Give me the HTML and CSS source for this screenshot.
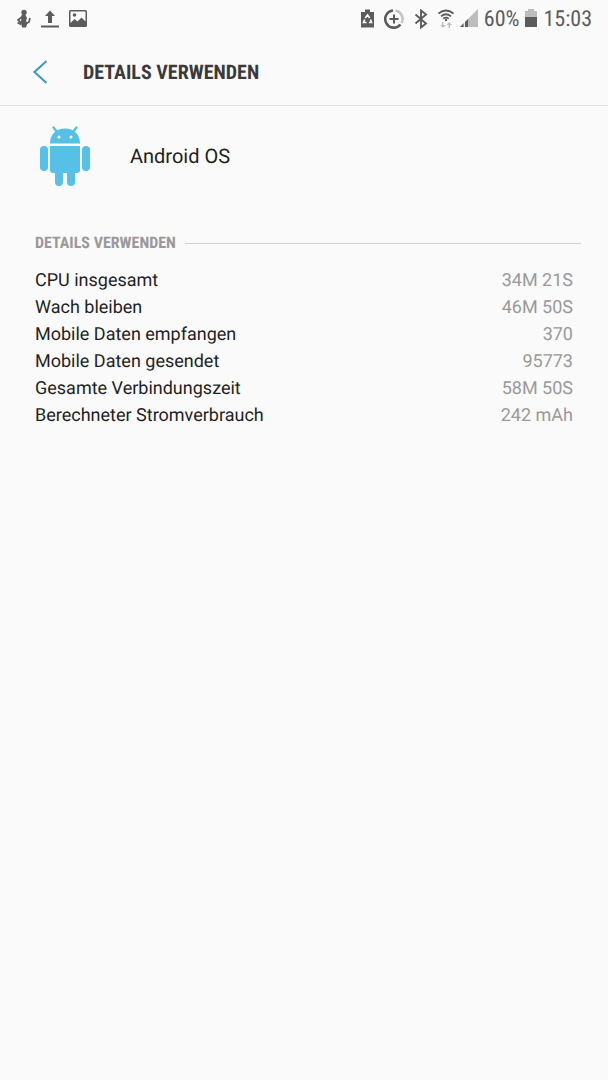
FILE: index.html
```html
<!DOCTYPE html>
<html lang="de">
<head>
    <meta charset="UTF-8">
    <meta name="viewport" content="width=device-width, initial-scale=1.0">
    <title>Details verwenden</title>
    <link rel="stylesheet" href="styles.css">
</head>
<body>
    <div class="status-bar">
        <div class="status-left">
            <svg width="14" height="20" viewBox="0 0 14 20" fill="#5c5c5c">
                <circle cx="7" cy="3.500" r="2.700"/>
                <path d="M4.500 6h4l1.500 3-1 3 1.500 2-1.500 4.500H5L4 14z"/>
                <path d="M5.500 7.500L1 11l3.500 3M.5 13.500L4 15.500M9.500 14.500l2.500-1.500 1-4" fill="none" stroke="#5c5c5c" stroke-width="1.700"/>
            </svg>
            <svg width="18" height="20" viewBox="0 0 18 20" fill="#5c5c5c">
                <path d="M9 1.500l5 5.500h-3v7H7V7H4z"/>
                <path d="M0 16.500h18v2H0z"/>
            </svg>
            <svg width="18" height="20" viewBox="0 0 18 20" fill="#5c5c5c">
                <path fill-rule="evenodd" d="M1.500 1h15A1.500 1.500 0 0 1 18 2.500v14a1.500 1.500 0 0 1-1.500 1.500h-15A1.500 1.500 0 0 1 0 16.500v-14A1.500 1.500 0 0 1 1.500 1zM1.500 2.500v11.500l4-4 3 2.500 4-4 4 4V2.500z"/>
                <circle cx="5.500" cy="6" r="1.800"/>
            </svg>
        </div>
        <div class="status-right">
            <div class="status-icons">
                <svg width="13" height="20" viewBox="0 0 13 20">
                    <path d="M4 .5h5V3h4v15.500H0V3h4z" fill="#5c5c5c"/>
                    <path d="M4.300 9l2.200-3 2.200 3M9.500 10.500l1 3H8M5.500 13.500h-3l1.200-3" fill="none" stroke="#fafafa" stroke-width="1.700"/>
                </svg>
                <svg width="20" height="20" viewBox="0 0 20 20" fill="none">
                    <path d="M11.500 1.500A8.600 8.600 0 0 1 17.500 14" stroke="#c4c4c4" stroke-width="2.600"/>
                    <path d="M9 1.500A8.600 8.600 0 1 0 16.500 15.500" stroke="#5c5c5c" stroke-width="2.600"/>
                    <path d="M10 5.500v9M5.500 10h9" stroke="#5c5c5c" stroke-width="2"/>
                </svg>
                <svg width="14" height="20" viewBox="0 0 14 20">
                    <path d="M1.500 5.500l10.500 9-5 4v-17l5 4-10.500 9" fill="none" stroke="#5c5c5c" stroke-width="1.900"/>
                </svg>
                <svg width="16" height="20" viewBox="0 0 16 20" fill="none">
                    <path d="M.5 4.500Q8-1.500 15.500 4.500M3 7.300Q8 3.200 13 7.300M5.200 9.700Q8 7.500 10.800 9.700" stroke="#5c5c5c" stroke-width="1.700"/>
                    <circle cx="8" cy="11" r="1.200" fill="#5c5c5c"/>
                    <path d="M4 13h1.500v3H8l-3.200 3L2 16h2zM10.500 19H12v-3h2l-2.800-3L8.500 16h2z" fill="#bdbdbd"/>
                </svg>
            </div>
            <svg width="18" height="20" viewBox="0 0 18 20">
                <path d="M18 0v18H0z" fill="#bdbdbd"/>
                <path d="M8 10V18H5v-5zM3.700 14.300V18H0z" fill="#5c5c5c"/>
                <path d="M4.300 12v6" stroke="#fafafa"/>
            </svg>
            <span class="battery-level">60%</span>
            <svg width="12" height="20" viewBox="0 0 12 20">
                <path d="M3 0h6v2h3v6H0V2h3z" fill="#bdbdbd"/>
                <path d="M0 8h12v10H0z" fill="#5c5c5c"/>
            </svg>
            <span class="clock">15:03</span>
        </div>
    </div>

    <header class="app-bar">
        <button type="button" class="back-btn" aria-label="Zurück">
            <svg width="16" height="24" viewBox="0 0 16 24">
                <path d="M14.500 1L2.500 12l12 11" fill="none" stroke="#419fc4" stroke-width="2.200"/>
            </svg>
        </button>
        <h1>DETAILS VERWENDEN</h1>
    </header>

    <main>
        <div class="app-info">
            <svg width="50" height="60" viewBox="0 0 50 60" fill="#56c0e6">
                <path d="M13.500 1.500l4 5M36.500 1.500l-4 5" stroke="#56c0e6" stroke-width="2.400" stroke-linecap="round"/>
                <path d="M10 17.500C10 8 16.500 2.500 25 2.500S40 8 40 17.500z"/>
                <circle cx="19" cy="11" r="1.500" fill="#fafafa"/>
                <circle cx="31" cy="11" r="1.500" fill="#fafafa"/>
                <path d="M10 20h30v24a3 3 0 0 1-3 3H13a3 3 0 0 1-3-3z"/>
                <rect x="0" y="20" width="8" height="25" rx="4"/>
                <rect x="42" y="20" width="8" height="25" rx="4"/>
                <rect x="15" y="40" width="8" height="20" rx="4"/>
                <rect x="27" y="40" width="8" height="20" rx="4"/>
            </svg>
            <span class="app-name">Android OS</span>
        </div>

        <h2>DETAILS VERWENDEN</h2>
        <table class="details">
            <tr><th scope="row">CPU insgesamt</th><td>34M 21S</td></tr>
            <tr><th scope="row">Wach bleiben</th><td>46M 50S</td></tr>
            <tr><th scope="row">Mobile Daten empfangen</th><td>370</td></tr>
            <tr><th scope="row">Mobile Daten gesendet</th><td>95773</td></tr>
            <tr><th scope="row">Gesamte Verbindungszeit</th><td>58M 50S</td></tr>
            <tr><th scope="row">Berechneter Stromverbrauch</th><td>242 mAh</td></tr>
        </table>
    </main>
</body>
</html>
```
FILE: styles.css
```css
body {
    margin: 0;
    background-color: #fafafa;
    color: #1f1f1f;
    font-family: Roboto, sans-serif;
    text-rendering: geometricPrecision;
}
svg {
    display: block;
    flex-shrink: 0;
}
.status-bar {
    display: flex;
    justify-content: space-between;
    align-items: center;
    height: 38px;
    padding: 0 16px 0 17px;
}
.status-left, .status-right, .status-icons {
    display: flex;
    align-items: center;
}
.status-left {
    gap: 10px;
}
.status-right {
    gap: 6px;
    color: #5c5c5c;
    font-family: "Roboto Condensed", Roboto, sans-serif;
    font-size: 22px;
}
.status-icons {
    gap: 10px;
}
.app-bar {
    display: flex;
    align-items: center;
    height: 67px;
    border-bottom: 1px solid #e0e0e0;
}
.back-btn {
    margin-left: 24px;
    padding: 8px;
    border: none;
    background: none;
    cursor: pointer;
}
h1, h2 {
    margin: 0;
    font-family: "Roboto Condensed", Roboto, sans-serif;
    font-weight: bold;
}
h1 {
    margin-left: 27px;
    color: #3a3a3a;
    font-size: 20px;
}
main {
    padding: 20px 27px 0 35px;
}
.app-info {
    display: flex;
    align-items: center;
    gap: 40px;
    padding-left: 5px;
}
.app-name {
    font-size: 20px;
}
h2 {
    display: flex;
    align-items: center;
    gap: 9px;
    margin-top: 45px;
    color: #999;
    font-size: 16px;
    line-height: 24px;
}
h2::after {
    content: "";
    flex: 1;
    height: 1px;
    background-color: #d0d0d0;
}
.details {
    width: 100%;
    margin-top: 12px;
    padding-right: 8px;
    border-collapse: separate;
    border-spacing: 0;
    font-size: 18px;
    line-height: 27px;
}
.details th, .details td {
    padding: 0;
}
.details th {
    font-weight: normal;
    text-align: left;
}
.details td {
    color: #999;
    text-align: right;
}
```
